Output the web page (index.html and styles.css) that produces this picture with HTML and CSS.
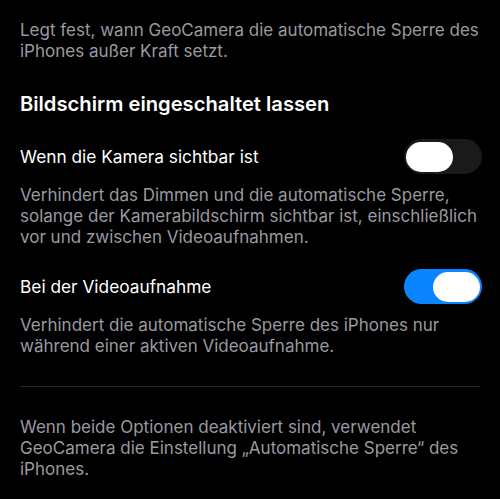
FILE: index.html
```html
<!DOCTYPE html>
<html lang="de">
<head>
<meta charset="utf-8">
<link rel="stylesheet" href="styles.css">
</head>
<body>
<main class="page">
  <p class="note intro">Legt fest, wann GeoCamera die automatische Sperre des iPhones außer Kraft setzt.</p>
  <h2 class="heading">Bildschirm eingeschaltet lassen</h2>
  <div class="row row-first">
    <span class="label">Wenn die Kamera sichtbar ist</span>
    <span class="toggle"><span class="knob"></span></span>
  </div>
  <p class="note desc">Verhindert das Dimmen und die automatische Sperre, solange der Kamerabildschirm sichtbar ist, einschließlich vor und zwischen Videoaufnahmen.</p>
  <div class="row row-second">
    <span class="label">Bei der Videoaufnahme</span>
    <span class="toggle on"><span class="knob"></span></span>
  </div>
  <p class="note desc">Verhindert die automatische Sperre des iPhones nur während einer aktiven Videoaufnahme.</p>
  <hr class="sep">
  <p class="note footer">Wenn beide Optionen deaktiviert sind, verwendet GeoCamera die Einstellung „Automatische Sperre“ des iPhones.</p>
</main>
</body>
</html>
```
FILE: styles.css
```css
html, body {
  margin: 0;
  padding: 0;
  background: #000;
}
body {
  font-family: Inter, "Noto Sans", sans-serif;
  color: #fff;
  -webkit-font-smoothing: antialiased;
}
.page {
  padding: 20px 20px 0 20px;
  display: flex;
  flex-direction: column;
}
.note {
  margin: 0;
  font-size: 17px;
  line-height: 21px;
  color: #9a9aa0;
}
.heading {
  margin: 30px 0 0 0;
  font-size: 20.2px;
  line-height: 24px;
  font-weight: 600;
}
.row {
  display: flex;
  align-items: center;
  justify-content: space-between;
  height: 35px;
}
.row-first { margin-top: 23px; }
.row-second { margin-top: 21px; }
.label {
  font-size: 17.3px;
  line-height: 22px;
  font-weight: 400;
}
.toggle {
  width: 78px;
  height: 35px;
  border-radius: 18px;
  background: #1a1a1c;
  box-sizing: border-box;
  padding: 2.5px 2px;
  display: flex;
  justify-content: flex-start;
  margin-right: -2px;
}
.toggle.on {
  background: #0a84ff;
  justify-content: flex-end;
}
.knob {
  width: 47px;
  height: 30px;
  border-radius: 15px;
  background: #fff;
}
.desc { margin-top: 11px; }
.sep {
  margin: 29px 0 0 0;
  border: 0;
  height: 1px;
  background: #2a2a2c;
}
.footer { margin-top: 30px; }
```
